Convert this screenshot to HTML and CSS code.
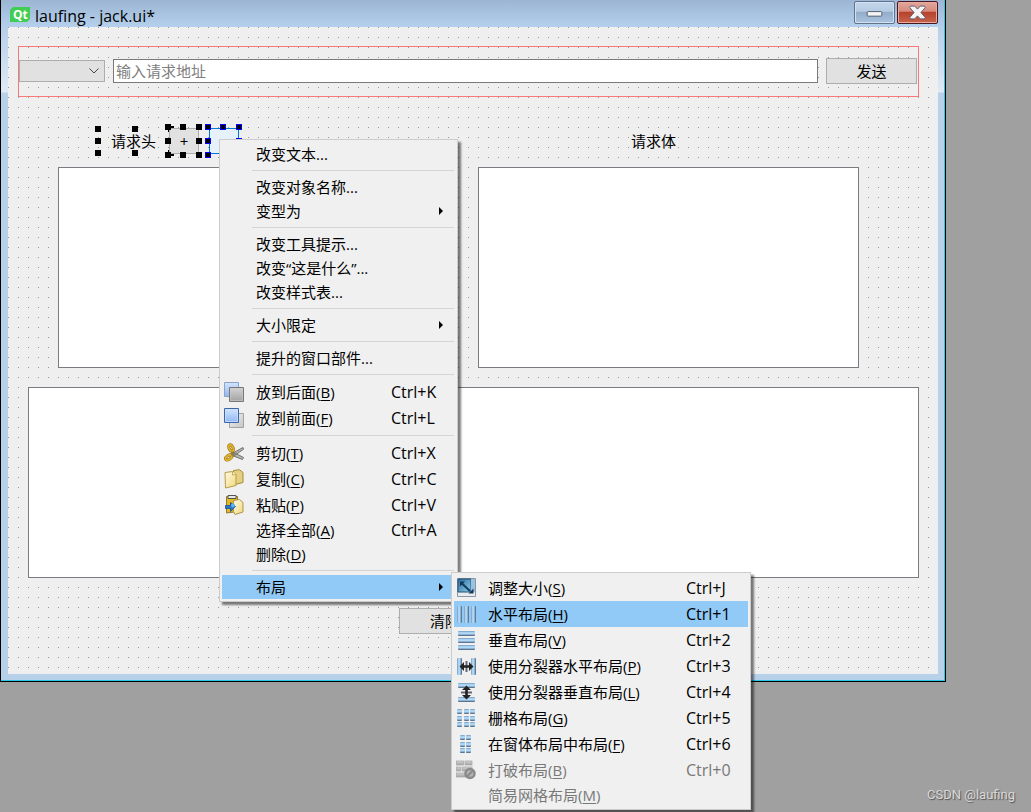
FILE: index.html
```html
<!DOCTYPE html>
<html lang="zh-CN">
<head>
<meta charset="utf-8">
<title>laufing - jack.ui*</title>
<link rel="stylesheet" href="styles.css">
</head>
<body>
<svg class="defs" width="0" height="0" aria-hidden="true">
  <defs>
    <linearGradient id="blue" x1="0" y1="0" x2="0" y2="1"><stop offset="0" stop-color="#d3e5ff"/><stop offset="1" stop-color="#8fb7f3"/></linearGradient>
    <linearGradient id="pale" x1="0" y1="0" x2="1" y2="1"><stop offset="0" stop-color="#f4f4f4"/><stop offset="1" stop-color="#c4c4c4"/></linearGradient>
    <linearGradient id="grey" x1="0" y1="0" x2="0" y2="1"><stop offset="0" stop-color="#d4d4d4"/><stop offset="1" stop-color="#a2a2a2"/></linearGradient>
    <linearGradient id="cream" x1="0" y1="0" x2="1" y2="1"><stop offset="0" stop-color="#fffbe2"/><stop offset="1" stop-color="#f0d77c"/></linearGradient>
    <linearGradient id="colbar" x1="0" y1="0" x2="1" y2="0"><stop offset="0" stop-color="#6d93bb"/><stop offset=".25" stop-color="#a6d0ef"/><stop offset=".6" stop-color="#b5dbf6"/><stop offset=".8" stop-color="#6a87a6"/><stop offset="1" stop-color="#566f8b"/></linearGradient>
    <linearGradient id="rowbar" x1="0" y1="0" x2="0" y2="1"><stop offset="0" stop-color="#6d93bb"/><stop offset=".25" stop-color="#a6d0ef"/><stop offset=".6" stop-color="#b5dbf6"/><stop offset=".8" stop-color="#6a87a6"/><stop offset="1" stop-color="#4c6480"/></linearGradient>
    <linearGradient id="size" x1="0" y1="0" x2="1" y2="1"><stop offset="0" stop-color="#2f6e9c"/><stop offset="1" stop-color="#8ccdf0"/></linearGradient>
  </defs>
</svg>

<main class="desktop">
  <section class="window">
    <header class="titlebar">
      <svg class="logo" viewBox="0 0 20 15" aria-hidden="true"><path d="M3 0H20V12L17 15H0V3Z" fill="#41cd52"/><text x="3" y="12" class="logo-text">Qt</text></svg>
      <h1 class="title">laufing - jack.ui*</h1>
      <button class="winbtn minimize" type="button" aria-label="最小化"><svg viewBox="0 0 41 23"><rect x="12.500" y="10.500" width="16" height="5" rx="1" fill="#f4f4f4" stroke="#4a5568"/></svg></button>
      <button class="winbtn close" type="button" aria-label="关闭"><svg viewBox="0 0 41 23"><path d="M13 4.500h4.500l3 3.300 3-3.300H28l1 1.500-4.700 5.500L29 17l-1 1.500h-4.500l-3-3.300-3 3.300H13L12 17l4.700-5.500L12 6z" fill="#f5f5f5" stroke="#53566a"/></svg></button>
    </header>

    <form class="form">
      <div class="request">
        <select class="method" aria-label="请求方法"></select>
        <input class="address" type="text" placeholder="输入请求地址" aria-label="请求地址">
        <button class="push send" type="button">发送</button>
      </div>

      <div class="columns">
        <section class="column">
          <div class="heading">
            <h2 class="label selected header-label">请求头<i class="h tl"></i><i class="h tc"></i><i class="h ml"></i><i class="h bl"></i><i class="h bc"></i><i class="h tr"></i><i class="h br"></i></h2>
            <button class="push square selected" type="button">+<i class="h tl"></i><i class="h tc"></i><i class="h tr"></i><i class="h ml"></i><i class="h mr"></i><i class="h bl"></i><i class="h bc"></i><i class="h br"></i></button>
            <button class="push square selected active" type="button" aria-label="删除行"><i class="h tl"></i><i class="h tc"></i><i class="h tr"></i><i class="h ml"></i><i class="h mr"></i><i class="h bl"></i><i class="h bc"></i><i class="h br"></i></button>
          </div>
          <div class="panel"></div>
        </section>
        <section class="column">
          <div class="heading body-heading"><h2 class="label">请求体</h2></div>
          <div class="panel"></div>
        </section>
      </div>

      <div class="result"></div>
      <button class="push clear" type="button">清除</button>
    </form>
  </section>

  <menu class="menu context">
    <li><button class="item" type="button"><span class="name">改变文本...</span></button></li>
    <li class="sep"></li>
    <li><button class="item" type="button"><span class="name">改变对象名称...</span></button></li>
    <li><button class="item more" type="button"><span class="name">变型为</span></button></li>
    <li class="sep"></li>
    <li><button class="item" type="button"><span class="name">改变工具提示...</span></button></li>
    <li><button class="item" type="button"><span class="name">改变“这是什么”...</span></button></li>
    <li><button class="item" type="button"><span class="name">改变样式表...</span></button></li>
    <li class="sep"></li>
    <li><button class="item more" type="button"><span class="name">大小限定</span></button></li>
    <li class="sep"></li>
    <li><button class="item" type="button"><span class="name">提升的窗口部件...</span></button></li>
    <li class="sep"></li>
    <li><button class="item tall" type="button"><svg class="icon" viewBox="0 0 20 20"><path d="M.5.500h14v14H.5z" fill="url(#blue)" stroke="#8aa4c6"/><path d="M5.500 5.500h14v14h-14z" fill="url(#grey)" stroke="#777"/><path d="M6.500 6.500h12v12h-12z" fill="none" stroke="#ccc" opacity=".6"/></svg><span class="name">放到后面(<u>B</u>)</span><kbd>Ctrl+K</kbd></button></li>
    <li><button class="item tall" type="button"><svg class="icon" viewBox="0 0 20 20"><path d="M5.500 5.500h14v14h-14z" fill="url(#pale)" stroke="#a2a2a2"/><path d="M.5.500h14v14H.5z" fill="url(#blue)" stroke="#3d66a8"/><path d="M1.500 1.500h12v12h-12z" fill="none" stroke="#cfe1fd" opacity=".7"/></svg><span class="name">放到前面(<u>F</u>)</span><kbd>Ctrl+L</kbd></button></li>
    <li class="sep"></li>
    <li><button class="item tall" type="button"><svg class="icon" viewBox="0 0 20 20"><path d="M8 10.500L19 4.500l.5 1.800L9 13.500zM8 8.500L19.500 14.500l-1 2L7 12z" fill="#b4b6b0" stroke="#73736c"/><ellipse cx="7" cy="5" rx="2" ry="3.400" transform="rotate(-25 7 5)" fill="#f0eee4" stroke="#8f6c12" stroke-width="3"/><ellipse cx="7" cy="5" rx="2" ry="3.400" transform="rotate(-25 7 5)" fill="none" stroke="#e0b02c" stroke-width="2"/><ellipse cx="4.600" cy="14.500" rx="3.400" ry="2" transform="rotate(-35 4.600 14.500)" fill="#f0eee4" stroke="#8f6c12" stroke-width="3"/><ellipse cx="4.600" cy="14.500" rx="3.400" ry="2" transform="rotate(-35 4.600 14.500)" fill="none" stroke="#e0b02c" stroke-width="2"/><path d="M7.500 8l4 3-4 2z" fill="#8d7a48"/></svg><span class="name">剪切(<u>T</u>)</span><kbd>Ctrl+X</kbd></button></li>
    <li><button class="item tall" type="button"><svg class="icon" viewBox="0 0 20 20"><path d="M9.500 1.500l6-.8 3.500 2.800v10l-8 2z" fill="#e5cf82" stroke="#a68b36"/><path d="M1 3.500L8.500 2.500 12 5.500v11L1.500 19z" fill="url(#cream)" stroke="#b99c46"/><path d="M8.500 2.500v3.500l3.500-.5" fill="#fff8d8" stroke="#b99c46" stroke-width=".8"/></svg><span class="name">复制(<u>C</u>)</span><kbd>Ctrl+C</kbd></button></li>
    <li><button class="item tall" type="button"><svg class="icon" viewBox="0 0 20 20"><path d="M2.500 1.500h11v15l-11 1.500z" fill="#e3b91f" stroke="#8d7a35"/><path d="M4 .5h8v3H4z" fill="#e9e9e2" stroke="#555"/><path d="M9.500 5.500l6-1 3.500 3v9.500l-8 2.500-1.500-3z" fill="url(#cream)" stroke="#b1954a"/><path d="M1.500 10.500h5V7.500l5 4-5 5v-3h-5z" fill="#2f73c9" stroke="#164f98" stroke-width=".8"/><circle cx="9" cy="10.500" r="2" fill="#57b6ee"/></svg><span class="name">粘贴(<u>P</u>)</span><kbd>Ctrl+V</kbd></button></li>
    <li><button class="item" type="button"><span class="name">选择全部(<u>A</u>)</span><kbd>Ctrl+A</kbd></button></li>
    <li><button class="item" type="button"><span class="name">删除(<u>D</u>)</span></button></li>
    <li class="sep"></li>
    <li><button class="item more current" type="button"><span class="name">布局</span></button></li>
  </menu>

  <menu class="menu layouts">
    <li><button class="item tall" type="button"><svg class="icon" viewBox="0 0 20 20"><path d="M1.500.5h18v18h-18z" fill="#e9ecef" stroke="#8795a5"/><path d="M2 1h13v13H2z" fill="url(#size)" stroke="#264f74"/><path d="M15 1h4v13h-4z" fill="#9bc3df"/><path d="M6 5.500l8 7.500" stroke="#12395a" stroke-width="2"/><path d="M4 3.500h5L4 8.500zM17.500 15.500v-5l-5 5z" fill="#12395a"/></svg><span class="name">调整大小(<u>S</u>)</span><kbd>Ctrl+J</kbd></button></li>
    <li><button class="item tall current" type="button"><svg class="icon" viewBox="0 0 20 20"><g fill="url(#colbar)"><rect x="1" y="2" width="5" height="17" rx="1"/><rect x="8" y="2" width="5" height="17" rx="1"/><rect x="15" y="2" width="5" height="17" rx="1"/></g></svg><span class="name">水平布局(<u>H</u>)</span><kbd>Ctrl+1</kbd></button></li>
    <li><button class="item tall" type="button"><svg class="icon" viewBox="0 0 20 20"><g fill="url(#rowbar)"><rect x="2" y="1" width="17" height="5" rx="1"/><rect x="2" y="8" width="17" height="5" rx="1"/><rect x="2" y="15" width="17" height="5" rx="1"/></g></svg><span class="name">垂直布局(<u>V</u>)</span><kbd>Ctrl+2</kbd></button></li>
    <li><button class="item tall" type="button"><svg class="icon" viewBox="0 0 20 20"><g fill="url(#colbar)"><rect x="1" y="2" width="5" height="17" rx="1"/><rect x="15" y="2" width="5" height="17" rx="1"/></g><path d="M10.500 5v11" stroke="#667" stroke-width="2"/><path d="M3.500 10.500l4.500-4.500v3.200h5V6l4.500 4.500L13 15v-3.200H8V15z" fill="#222"/></svg><span class="name">使用分裂器水平布局(<u>P</u>)</span><kbd>Ctrl+3</kbd></button></li>
    <li><button class="item tall" type="button"><svg class="icon" viewBox="0 0 20 20"><g fill="url(#rowbar)"><rect x="2" y="1" width="17" height="5" rx="1"/><rect x="2" y="15" width="17" height="5" rx="1"/></g><path d="M5 10.500h11" stroke="#667" stroke-width="2"/><path d="M10.500 3.500L15 8h-3.200v5H15l-4.500 4.500L6 13h3.200V8H6z" fill="#222"/></svg><span class="name">使用分裂器垂直布局(<u>L</u>)</span><kbd>Ctrl+4</kbd></button></li>
    <li><button class="item tall" type="button"><svg class="icon" viewBox="0 0 20 20"><g fill="url(#rowbar)"><rect x="1" y="1" width="5" height="5" rx="1"/><rect x="8" y="1" width="5" height="5" rx="1"/><rect x="14" y="1" width="5" height="5" rx="1"/><rect x="1" y="8" width="5" height="5" rx="1"/><rect x="8" y="8" width="5" height="5" rx="1"/><rect x="14" y="8" width="5" height="5" rx="1"/><rect x="1" y="14" width="5" height="5" rx="1"/><rect x="8" y="14" width="5" height="5" rx="1"/><rect x="14" y="14" width="5" height="5" rx="1"/></g></svg><span class="name">栅格布局(<u>G</u>)</span><kbd>Ctrl+5</kbd></button></li>
    <li><button class="item tall" type="button"><svg class="icon" viewBox="0 0 20 20"><g fill="url(#rowbar)"><rect x="4" y="1" width="5" height="5" rx="1"/><rect x="10" y="1" width="5" height="5" rx="1"/><rect x="4" y="8" width="5" height="5" rx="1"/><rect x="10" y="8" width="5" height="5" rx="1"/><rect x="4" y="14" width="5" height="5" rx="1"/><rect x="10" y="14" width="5" height="5" rx="1"/></g></svg><span class="name">在窗体布局中布局(<u>F</u>)</span><kbd>Ctrl+6</kbd></button></li>
    <li><button class="item tall" type="button" disabled><svg class="icon" viewBox="0 0 20 20"><g fill="url(#grey)" stroke="#aaa" stroke-width=".8"><rect x=".5" y="1" width="7" height="4"/><rect x="9" y="1" width="7" height="4"/><rect x=".5" y="7" width="4" height="4"/><rect x="6" y="7" width="10" height="4"/><rect x=".5" y="13" width="9" height="4"/></g><circle cx="14" cy="13.500" r="4.500" fill="#b4b4b4" stroke="#8a8a8a" stroke-width="2.500"/><path d="M11 16.500l6-6" stroke="#8a8a8a" stroke-width="2"/></svg><span class="name">打破布局(<u>B</u>)</span><kbd>Ctrl+0</kbd></button></li>
    <li><button class="item" type="button" disabled><span class="name">简易网格布局(<u>M</u>)</span></button></li>
  </menu>

  <footer class="credit">CSDN @laufing</footer>
</main>
</body>
</html>
```
FILE: styles.css
```css
* { box-sizing: border-box; }

body {
  margin: 0;
  background: #a0a0a0;
  color: #000;
  font: 15px/20px "Open Sans", "Noto Sans CJK SC", sans-serif;
}

button, input, select { font: inherit; color: inherit; }
.defs { position: absolute; }

.desktop {
  position: relative;
  min-height: 100vh;
  overflow: hidden;
}

/* Window frame */
.window {
  margin-right: 85px;
  padding: 0 6px 7px 7px;
  border: solid #000;
  border-width: 0 1px 1px;
  box-shadow: inset -1px -1px #2ac8e4;
  background: linear-gradient(#9bb5d2 0, #b4cfeb 27px, #dfeaf6 92px, #b8d1ea 93px);
}

.titlebar {
  display: flex;
  align-items: flex-start;
  gap: 2px;
  height: 27px;
  margin-right: 1px;
  padding: 1px 0 0 2px;
  background: linear-gradient(#9bb5d2, #b5d0ec);
}

.logo { width: 20px; height: 15px; margin-top: 6px; }
.logo-text { font: bold 12px "Open Sans", sans-serif; fill: #fff; }

.title {
  flex: 1;
  margin: 0 0 0 3px;
  font-size: 16px;
  font-weight: 400;
  line-height: 30px;
}

.winbtn {
  width: 41px;
  height: 23px;
  padding: 0;
  border: 1px solid #62738c;
  border-radius: 2px;
  background: linear-gradient(#c4d6ea 0, #b5cbe3 45%, #91abc9 46%, #aac3df 100%);
  box-shadow: inset 0 0 0 1px #d2e1f1;
}
.winbtn svg { display: block; width: 100%; height: 100%; }
.close {
  border-color: #4c1620;
  background: linear-gradient(#e3a79c 0, #d58a7d 45%, #b5402b 46%, #c8644c 100%);
  box-shadow: inset 0 0 0 1px #e5aca0;
}

/* Form canvas */
.form {
  margin-right: 1px;
  padding: 19px 19px 40px 10px;
  background: conic-gradient(from 0deg at 1px 1px, transparent 270deg, #999 270deg) 0 0 / 10px 10px #efefef;
}

.request {
  display: flex;
  align-items: center;
  gap: 8px;
  height: 51px;
  padding: 0 1px 1px 0;
  border: 1px solid #f87878;
}

.method {
  width: 86px;
  height: 22px;
  border: 1px solid #adadad;
  border-radius: 0;
  appearance: none;
  background: url("data:image/svg+xml,%3Csvg xmlns='http://www.w3.org/2000/svg' width='10' height='6'%3E%3Cpath d='M.5.5L5 5 9.500.5' fill='none' stroke='%23444'/%3E%3C/svg%3E") no-repeat right 5px center #e1e1e1;
}

.address {
  flex: 1;
  min-width: 0;
  height: 24px;
  padding: 0 2px;
  border: 1px solid #7a7a7a;
  background: #fff;
}
.address::placeholder { color: #808080; opacity: 1; }

.push {
  height: 26px;
  padding: 0;
  border: 1px solid #adadad;
  background: #e1e1e1;
}
.send { width: 91px; }

.columns {
  display: grid;
  grid-template-columns: 1fr 1fr;
  gap: 39px;
  margin-top: 31px;
  padding: 0 60px 0 40px;
}

.heading {
  display: flex;
  align-items: center;
  gap: 10px;
  height: 26px;
  margin-bottom: 13px;
  padding-left: 40px;
}
.body-heading { justify-content: center; padding: 0 30px 0 0; }

.label { margin: 0; font-size: 15px; font-weight: 400; text-align: center; }
.header-label { width: 71px; margin-right: -10px; }
.square { width: 30px; }
.active { border-color: #0078d7; background: #e5f1fb; }

.panel, .result { border: 1px solid #7a7a80; background: #fff; }
.panel { height: 201px; }
.result { height: 191px; margin: 19px 0 30px 10px; }
.clear { display: block; width: 92px; margin-left: 381px; }

/* Selection handles */
.selected { position: relative; }
.h { position: absolute; width: 6px; height: 6px; background: #000; }
.active .h { border: 1px solid #00f; }
.tl, .tc, .tr { top: -5px; }
.bl, .bc, .br { bottom: -5px; }
.ml, .mr { top: calc(50% - 3px); }
.tl, .ml, .bl { left: -5px; }
.tc, .bc { left: calc(50% - 4px); }
.tr, .mr, .br { right: -4px; }
.header-label .h { margin-left: 2px; }
.header-label .tr, .header-label .br { right: -5px; }

/* Pop-up menus */
.menu {
  position: absolute;
  margin: 0;
  padding: 2px;
  border: 1px solid #ccc;
  background: #f0f0f0;
  box-shadow: 3px 3px 2px rgba(0, 0, 0, .5);
  list-style: none;
}
.context { left: 219px; top: 139px; width: 239px; }
.layouts { left: 451px; top: 572px; width: 300px; }

.sep { height: 9px; padding: 4px 1px 4px 30px; }
.sep::before { content: ""; display: block; height: 1px; background: #d4d4d4; }

.item {
  display: flex;
  align-items: center;
  position: relative;
  width: 100%;
  height: 24px;
  padding: 0 0 0 34px;
  border: 0;
  background: none;
  text-align: left;
  white-space: nowrap;
}
.item.tall { height: 26px; padding-left: 2px; }
.item.current { background: #91c9f7; }
.item:disabled { color: #787878; }

.icon { flex: none; width: 20px; height: 20px; margin-right: 12px; }
.name { flex: 1; }
.item u { text-underline-offset: 2px; }

kbd { width: 64px; font: inherit; font-size: 16px; }
.layouts kbd { width: 62px; }

.more::after {
  content: "";
  margin-right: 12px;
  border: solid transparent;
  border-width: 4px 0 4px 4px;
  border-left-color: #000;
}

.credit {
  position: absolute;
  right: 16px;
  bottom: 7px;
  color: #d8d8d8;
  font-family: Roboto, sans-serif;
  font-size: 13px;
  text-shadow: 1px 1px 1px #555;
}
```
